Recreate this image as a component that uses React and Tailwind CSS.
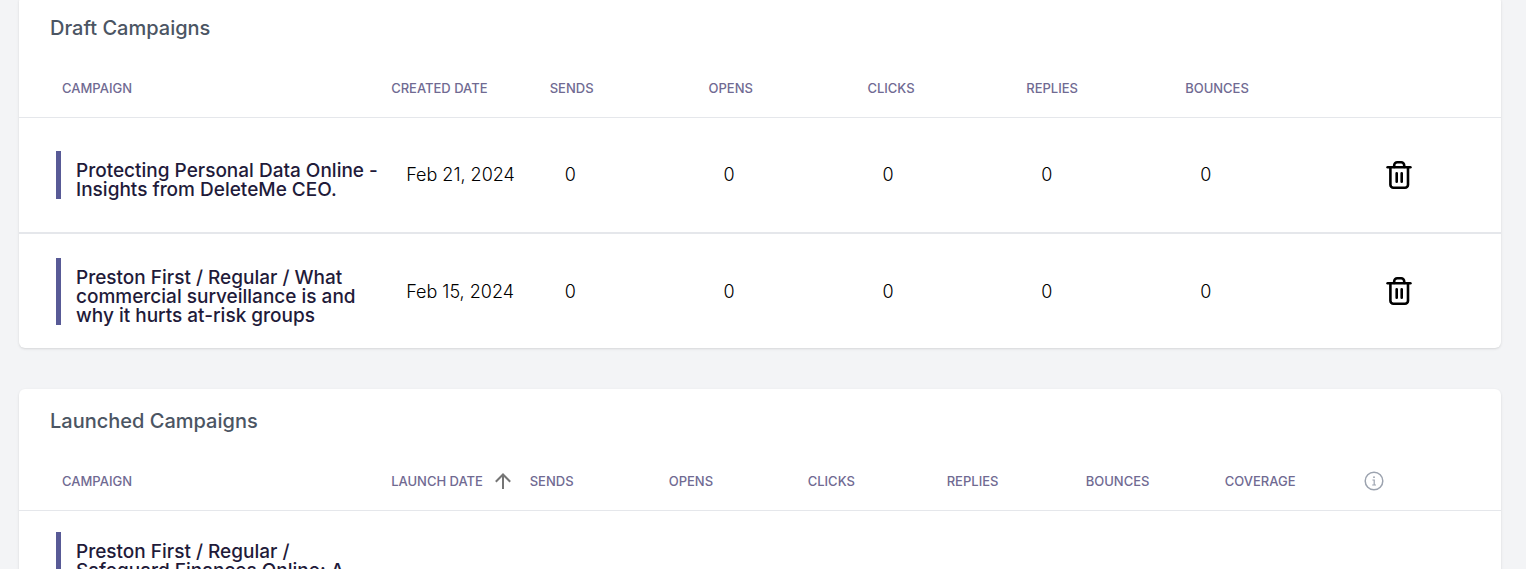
const draftCampaigns = [
  {
    name: "Protecting Personal Data Online - Insights from DeleteMe CEO.",
    date: "Feb 21, 2024",
  },
  {
    name: "Preston First / Regular / What commercial surveillance is and why it hurts at-risk groups",
    date: "Feb 15, 2024",
  },
];

const stats = ["Sends", "Opens", "Clicks", "Replies", "Bounces"];

function TrashIcon() {
  return (
    <svg width="26" height="30" viewBox="0 0 26 30" fill="none" stroke="currentColor" strokeWidth="2.6" strokeLinecap="round" strokeLinejoin="round" aria-hidden="true">
      <path d="M1.6 7.3h22.8" />
      <path d="M4.4 7.3v17.4a3 3 0 0 0 3 3h11.6a3 3 0 0 0 3-3V7.3" />
      <path d="M8.2 7V5.2a3 3 0 0 1 3-3h4a3 3 0 0 1 3 3V7" />
      <path d="M10.7 13.3v8.4M15.7 13.3v8.4" />
    </svg>
  );
}

function ArrowUpIcon() {
  return (
    <svg width="16" height="16" viewBox="0 0 16 16" fill="none" stroke="currentColor" strokeWidth="2" aria-hidden="true">
      <path d="M8 16V1.6M.8 8.7 8 1.5l7.2 7.2" />
    </svg>
  );
}

function InfoIcon() {
  return (
    <svg width="20" height="20" viewBox="0 0 20 20" fill="none" stroke="currentColor" aria-hidden="true">
      <circle cx="10" cy="10" r="8.8" strokeWidth="1.5" />
      <path d="M8.4 9h1.8v5M8.2 14h3.8" strokeWidth="1.2" />
      <circle cx="10" cy="6.2" r=".9" fill="currentColor" stroke="none" />
    </svg>
  );
}

function Card({ title, className = "", children }) {
  return (
    <section className={`overflow-hidden rounded-md bg-white shadow ${className}`}>
      <h2 className="px-[31px] pt-[18px] text-xl leading-7 font-medium text-[#4b5563]">{title}</h2>
      {children}
    </section>
  );
}

function HeadCell({ children }) {
  return <th scope="col" className="px-3 pt-[18px] font-medium whitespace-nowrap">{children}</th>;
}

function CampaignName({ children }) {
  return (
    <div className="ml-[37px] border-l-[5px] border-[#585a96] pt-2.5 pl-[15px] text-[19px] leading-[19px] font-medium text-[#1f1b3a]">
      {children}
    </div>
  );
}

const headRowClass = "h-[75px] border-b border-[#e5e7eb] text-left text-[13px] leading-4 text-[#706a92] uppercase";

export default function App() {
  return (
    <main className="flex h-screen flex-col gap-[41px] overflow-hidden bg-[#f3f4f6] pr-[25px] pl-[19px] font-['Inter',sans-serif]">
      <Card title="Draft Campaigns" className="-mt-1 shrink-0">
        <table className="w-full table-fixed border-collapse">
          <colgroup>
            <col className="w-[24.3%]" />
            <col className="w-[10.7%]" />
            {stats.map((s) => (
              <col key={s} className="w-[10.72%]" />
            ))}
            <col />
          </colgroup>
          <thead>
            <tr className={headRowClass}>
              <th scope="col" className="pt-[18px] pl-[43px] font-medium">Campaign</th>
              <HeadCell>Created Date</HeadCell>
              {stats.map((s) => (
                <HeadCell key={s}>{s}</HeadCell>
              ))}
              <td />
            </tr>
          </thead>
          <tbody>
            {draftCampaigns.map((c) => (
              <tr key={c.name} className="h-[116px] border-b-2 border-[#e5e7eb] text-lg font-light text-black last:h-[115px] last:border-b-0">
                <td>
                  <CampaignName>{c.name}</CampaignName>
                </td>
                <td className="pt-px pl-[27px] whitespace-nowrap">{c.date}</td>
                {stats.map((s) => (
                  <td key={s} className="pt-px pl-[27px]">0</td>
                ))}
                <td className="pl-[54px]">
                  <button type="button" aria-label="Delete campaign" className="block">
                    <TrashIcon />
                  </button>
                </td>
              </tr>
            ))}
          </tbody>
        </table>
      </Card>

      <Card title="Launched Campaigns" className="shrink-0">
        <table className="w-full table-fixed border-collapse">
          <colgroup>
            <col className="w-[24.3%]" />
            <col className="w-[9.35%]" />
            {stats.map((s) => (
              <col key={s} className="w-[9.38%]" />
            ))}
            <col className="w-[9.38%]" />
            <col />
          </colgroup>
          <thead>
            <tr className={headRowClass}>
              <th scope="col" className="pt-[18px] pl-[43px] font-medium">Campaign</th>
              <HeadCell>
                <button type="button" className="flex items-center gap-3 uppercase">
                  Launch Date
                  <span className="text-[#757575]">
                    <ArrowUpIcon />
                  </span>
                </button>
              </HeadCell>
              {stats.map((s) => (
                <HeadCell key={s}>{s}</HeadCell>
              ))}
              <HeadCell>Coverage</HeadCell>
              <td className="px-3 pt-[18px] text-[#9ca3af]">
                <button type="button" aria-label="Coverage information" className="block">
                  <InfoIcon />
                </button>
              </td>
            </tr>
          </thead>
          <tbody>
            <tr>
              <td className="py-[21px]">
                <CampaignName>Preston First / Regular / Safeguard Finances Online: A</CampaignName>
              </td>
              <td colSpan={8} />
            </tr>
          </tbody>
        </table>
      </Card>
    </main>
  );
}
